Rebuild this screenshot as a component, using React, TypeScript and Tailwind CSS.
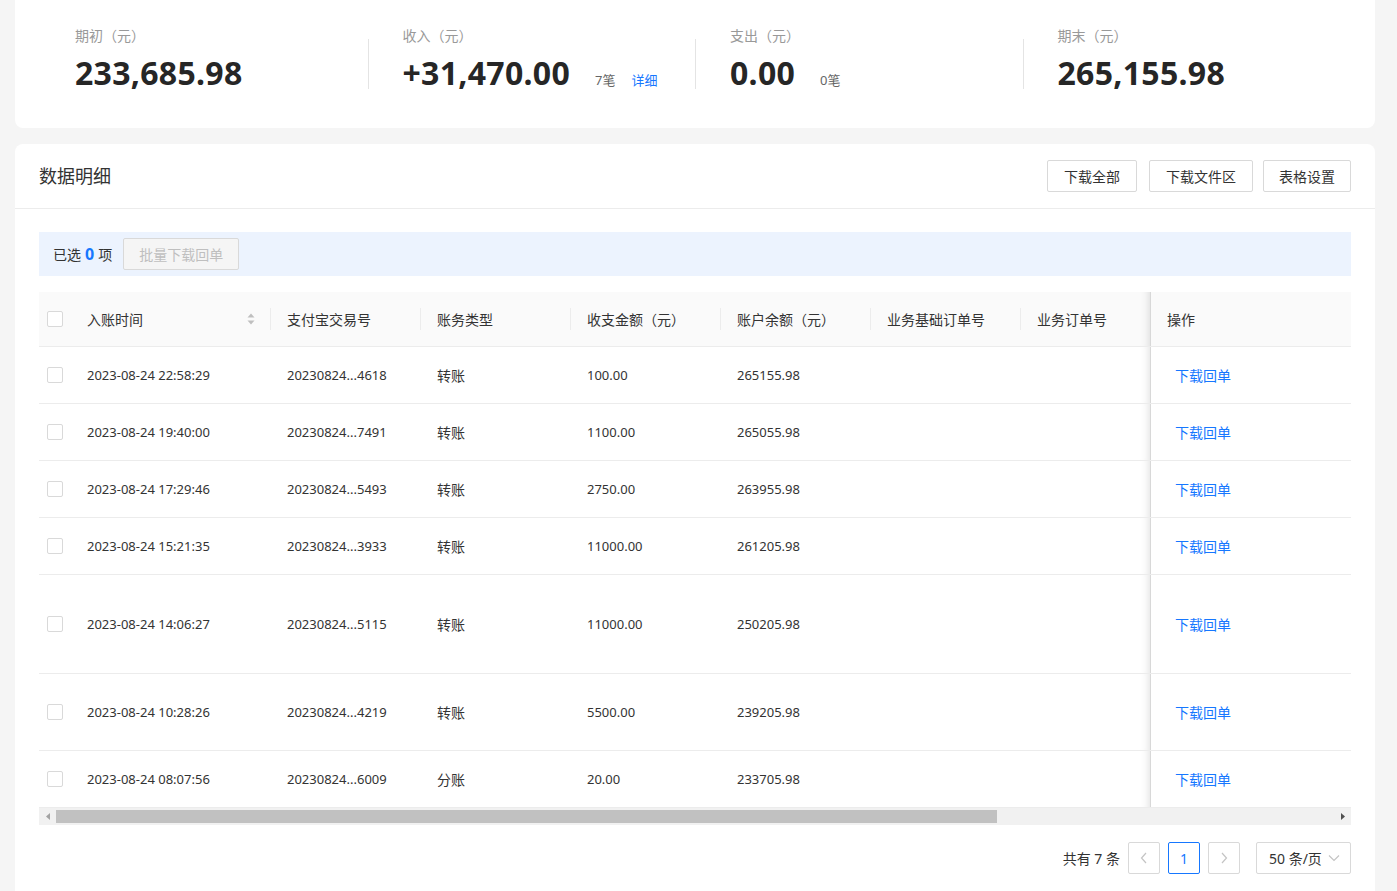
import React from "react";

const FONT = '"Noto Sans", "Noto Sans CJK SC", sans-serif';

type Row = { t: string; no: string; type: string; amt: string; bal: string; h: string };

const rows: Row[] = [
  { t: "2023-08-24 22:58:29", no: "20230824...4618", type: "转账", amt: "100.00", bal: "265155.98", h: "h-[57px]" },
  { t: "2023-08-24 19:40:00", no: "20230824...7491", type: "转账", amt: "1100.00", bal: "265055.98", h: "h-[57px]" },
  { t: "2023-08-24 17:29:46", no: "20230824...5493", type: "转账", amt: "2750.00", bal: "263955.98", h: "h-[57px]" },
  { t: "2023-08-24 15:21:35", no: "20230824...3933", type: "转账", amt: "11000.00", bal: "261205.98", h: "h-[57px]" },
  { t: "2023-08-24 14:06:27", no: "20230824...5115", type: "转账", amt: "11000.00", bal: "250205.98", h: "h-[99px]" },
  { t: "2023-08-24 10:28:26", no: "20230824...4219", type: "转账", amt: "5500.00", bal: "239205.98", h: "h-[77px]" },
  { t: "2023-08-24 08:07:56", no: "20230824...6009", type: "分账", amt: "20.00", bal: "233705.98", h: "h-[57px]" },
];

function Checkbox() {
  return <div className="w-4 h-4 border border-[#d9d9d9] rounded-[2px] bg-white" />;
}

function Divider() {
  return <div className="w-px h-[22px] bg-[#ececec]" />;
}

function Stat({
  label,
  value,
  first,
  extra,
}: {
  label: string;
  value: string;
  first?: boolean;
  extra?: React.ReactNode;
}) {
  return (
    <div className="flex-1 flex items-start">
      {first ? <div className="w-px" /> : <div className="w-px h-[50px] mt-[13px] bg-[#e4e4e4]" />}
      <div className="pl-[34px] flex flex-col">
        <div className="text-[14px] leading-[20px] text-[#999999]">{label}</div>
        <div className="flex items-baseline mt-[5px]">
          <span className="text-[32px] leading-[44px] font-bold text-[#262626] tracking-[0.3px]">{value}</span>
          {extra}
        </div>
      </div>
    </div>
  );
}

function Btn({ children, w }: { children: React.ReactNode; w: string }) {
  return (
    <div
      className={`${w} h-8 flex items-center justify-center border border-[#d9d9d9] rounded-[2px] bg-white text-[14px] text-[#333333]`}
    >
      {children}
    </div>
  );
}

const shadowCell =
  "relative before:absolute before:left-0 before:top-0 before:bottom-0 before:w-[30px] before:-translate-x-full before:shadow-[inset_-10px_0_8px_-8px_rgba(0,0,0,0.13)] border-l border-[#ececec]";

export default function App() {
  return (
    <div className="min-h-[891px] bg-[#f5f5f5] text-[#333333]" style={{ fontFamily: FONT }}>
      {/* Summary card */}
      <div className="ml-[15px] w-[1360px] bg-white rounded-b-lg px-[25px] pt-[26px] pb-[33px] flex">
        <Stat label="期初（元）" value="233,685.98" first />
        <Stat
          label="收入（元）"
          value="+31,470.00"
          extra={
            <>
              <span className="ml-[25px] text-[13px] text-[#666666]">7笔</span>
              <span className="ml-4 text-[13px] text-[#1677ff]">详细</span>
            </>
          }
        />
        <Stat
          label="支出（元）"
          value="0.00"
          extra={<span className="ml-[25px] text-[13px] text-[#666666]">0笔</span>}
        />
        <Stat label="期末（元）" value="265,155.98" />
      </div>

      {/* Detail card */}
      <div className="ml-[15px] mt-4 w-[1360px] bg-white rounded-t-lg pb-8">
        <div className="h-[65px] px-6 flex items-center justify-between border-b border-[#ececec]">
          <div className="text-[18px] text-[#333333]">数据明细</div>
          <div className="flex items-center">
            <Btn w="w-[90px]">下载全部</Btn>
            <div className="w-3" />
            <Btn w="w-[104px]">下载文件区</Btn>
            <div className="w-[10px]" />
            <Btn w="w-[88px]">表格设置</Btn>
          </div>
        </div>

        <div className="px-6 pt-[23px]">
          {/* selection bar */}
          <div className="h-[44px] bg-[#ecf3fe] flex items-center pl-[14px]">
            <span className="text-[14px]">已选</span>
            <span className="mx-1 text-[16px] font-bold text-[#1677ff]">0</span>
            <span className="text-[14px]">项</span>
            <div className="ml-[11px] h-8 w-[116px] flex items-center justify-center border border-[#d9d9d9] rounded-[2px] bg-[#f5f5f5] text-[14px] text-[#bfbfbf]">
              批量下载回单
            </div>
          </div>

          {/* table */}
          <div className="mt-4 text-[14px]">
            <div className="h-[55px] flex bg-[#fafafa] border-b border-[#ececec]">
              <div className="w-8 pl-2 flex items-center">
                <Checkbox />
              </div>
              <div className="w-[200px] pl-4 flex items-center">
                <span className="flex-1">入账时间</span>
                <svg width="8" height="12" viewBox="0 0 8 12" className="mr-[15px]">
                  <path d="M4 0.5 L7.5 4.5 L0.5 4.5 Z" fill="#bfbfbf" />
                  <path d="M4 11.5 L7.5 7.5 L0.5 7.5 Z" fill="#bfbfbf" />
                </svg>
                <Divider />
              </div>
              <div className="w-[150px] pl-4 flex items-center">
                <span className="flex-1">支付宝交易号</span>
                <Divider />
              </div>
              <div className="w-[150px] pl-4 flex items-center">
                <span className="flex-1">账务类型</span>
                <Divider />
              </div>
              <div className="w-[150px] pl-4 flex items-center">
                <span className="flex-1">收支金额（元）</span>
                <Divider />
              </div>
              <div className="w-[150px] pl-4 flex items-center">
                <span className="flex-1">账户余额（元）</span>
                <Divider />
              </div>
              <div className="w-[150px] pl-4 flex items-center">
                <span className="flex-1">业务基础订单号</span>
                <Divider />
              </div>
              <div className="w-[129px] pl-4 flex items-center">
                <span className="flex-1">业务订单号</span>
              </div>
              <div className={`w-[201px] pl-4 flex items-center bg-[#fafafa] ${shadowCell}`}>操作</div>
            </div>

            {rows.map((r, i) => (
              <div key={i} className={`${r.h} flex border-b border-[#ececec]`}>
                <div className="w-8 pl-2 flex items-center">
                  <Checkbox />
                </div>
                <div className="w-[200px] pl-4 pt-px flex items-center text-[13px]">{r.t}</div>
                <div className="w-[150px] pl-4 pt-px flex items-center text-[13px]">{r.no}</div>
                <div className="w-[150px] pl-4 flex items-center">{r.type}</div>
                <div className="w-[150px] pl-4 pt-px flex items-center text-[13px]">{r.amt}</div>
                <div className="w-[150px] pl-4 pt-px flex items-center text-[13px]">{r.bal}</div>
                <div className="w-[150px]" />
                <div className="w-[129px]" />
                <div className={`w-[201px] pl-6 flex items-center bg-white ${shadowCell}`}>
                  <span className="text-[#1677ff]">下载回单</span>
                </div>
              </div>
            ))}

            {/* scrollbar */}
            <div className="h-[17px] bg-[#f1f1f1] flex items-center">
              <div className="w-[17px] flex items-center justify-center">
                <svg width="4" height="7" viewBox="0 0 4 7">
                  <path d="M4 0 L0 3.5 L4 7 Z" fill="#a3a3a3" />
                </svg>
              </div>
              <div className="w-[941px] h-[13px] bg-[#c1c1c1]" />
              <div className="flex-1" />
              <div className="w-[17px] flex items-center justify-center">
                <svg width="4" height="7" viewBox="0 0 4 7">
                  <path d="M0 0 L4 3.5 L0 7 Z" fill="#505050" />
                </svg>
              </div>
            </div>
          </div>

          {/* pagination */}
          <div className="mt-[17px] flex items-center justify-end text-[14px]">
            <span className="mr-2">共有 7 条</span>
            <div className="w-8 h-8 flex items-center justify-center border border-[#d9d9d9] rounded-[2px]">
              <svg width="8" height="12" viewBox="0 0 8 12">
                <path d="M6 1 L1.5 6 L6 11" stroke="#c4c4c4" strokeWidth="1.2" fill="none" />
              </svg>
            </div>
            <div className="ml-2 w-8 h-8 flex items-center justify-center border border-[#1677ff] rounded-[2px] text-[#1677ff]">
              1
            </div>
            <div className="ml-2 w-8 h-8 flex items-center justify-center border border-[#d9d9d9] rounded-[2px]">
              <svg width="8" height="12" viewBox="0 0 8 12">
                <path d="M2 1 L6.5 6 L2 11" stroke="#c4c4c4" strokeWidth="1.2" fill="none" />
              </svg>
            </div>
            <div className="ml-4 w-[95px] h-8 flex items-center justify-between pl-3 pr-[10px] border border-[#d9d9d9] rounded-[2px]">
              <span>50 条/页</span>
              <svg width="12" height="8" viewBox="0 0 12 8">
                <path d="M1 1.5 L6 6.5 L11 1.5" stroke="#c4c4c4" strokeWidth="1.2" fill="none" />
              </svg>
            </div>
          </div>
        </div>
      </div>
    </div>
  );
}
